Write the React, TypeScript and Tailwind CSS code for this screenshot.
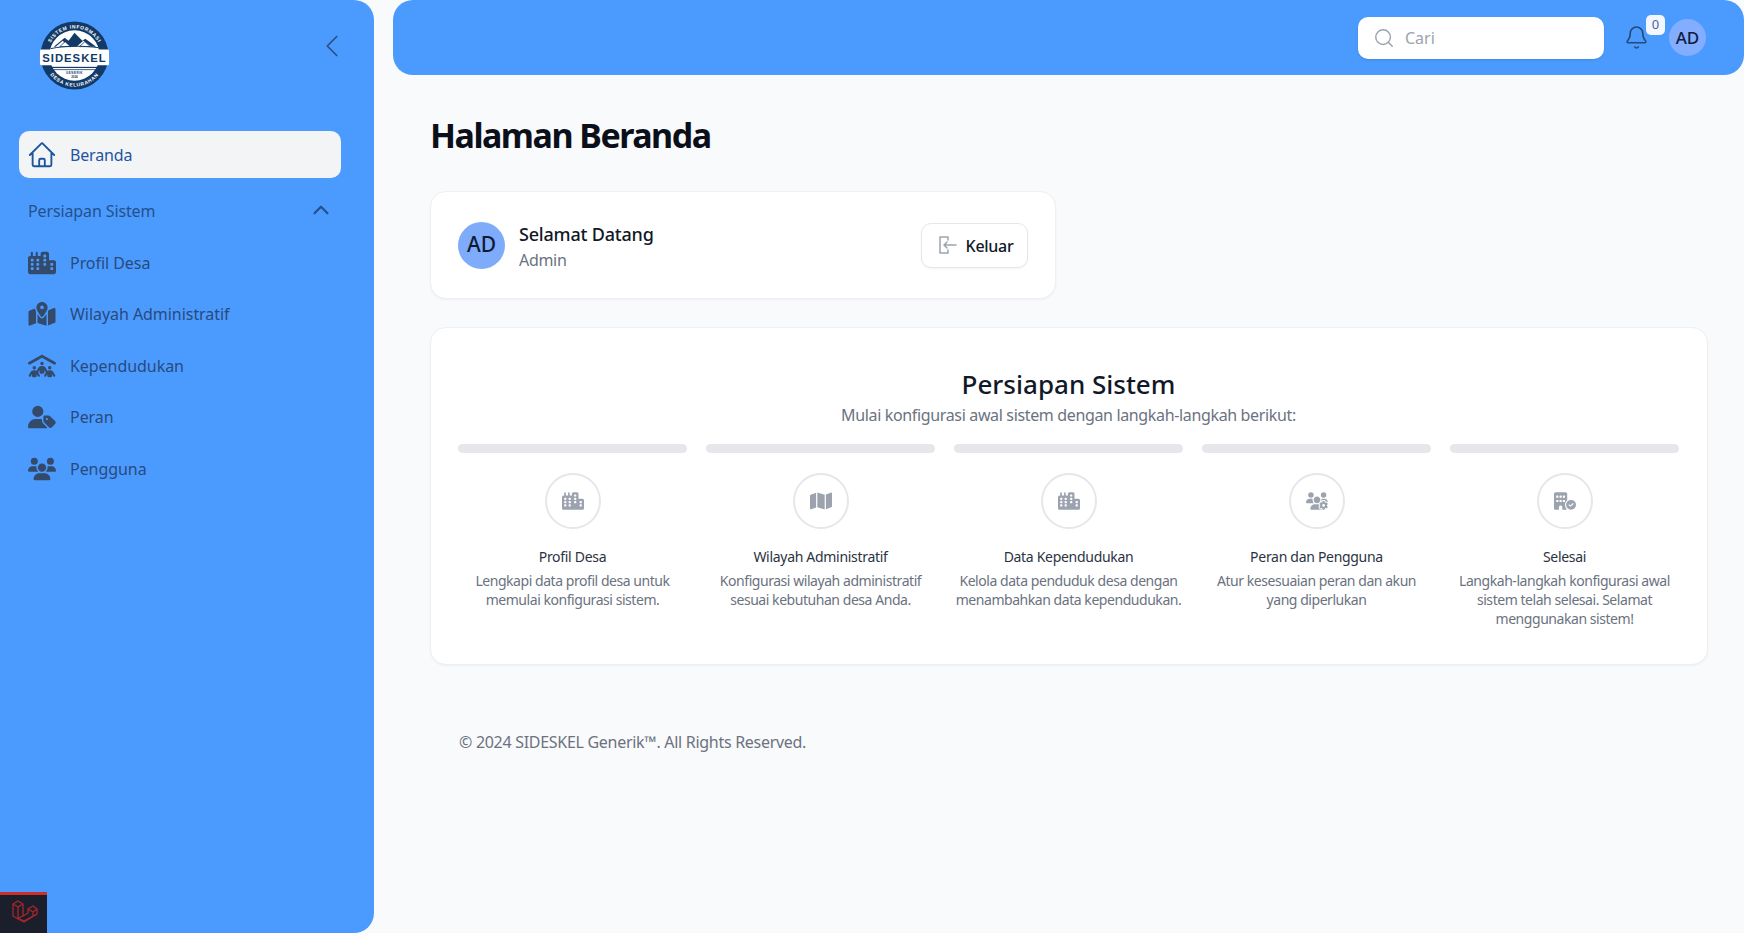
import React from "react";
import { FaCity, FaMapLocationDot, FaPeopleRoof, FaUserTag, FaUsers, FaMap, FaUsersGear, FaBuildingCircleCheck } from "react-icons/fa6";
import { HiOutlineHome } from "react-icons/hi2";
import { ChevronLeft, ChevronUp, Search, Bell } from "lucide-react";

const menu = [
  { label: "Profil Desa", icon: FaCity },
  { label: "Wilayah Administratif", icon: FaMapLocationDot },
  { label: "Kependudukan", icon: FaPeopleRoof },
  { label: "Peran", icon: FaUserTag },
  { label: "Pengguna", icon: FaUsers },
];

const steps = [
  { title: "Profil Desa", desc: "Lengkapi data profil desa untuk memulai konfigurasi sistem.", icon: FaCity },
  { title: "Wilayah Administratif", desc: "Konfigurasi wilayah administratif sesuai kebutuhan desa Anda.", icon: FaMap },
  { title: "Data Kependudukan", desc: "Kelola data penduduk desa dengan menambahkan data kependudukan.", icon: FaCity },
  { title: "Peran dan Pengguna", desc: "Atur kesesuaian peran dan akun yang diperlukan", icon: FaUsersGear },
  { title: "Selesai", desc: "Langkah-langkah konfigurasi awal sistem telah selesai. Selamat menggunakan sistem!", icon: FaBuildingCircleCheck },
];

function Logo() {
  return (
    <svg width="71" height="71" viewBox="0 0 72 72">
      <defs>
        <path id="arcTop" d="M8.5 36a27.5 27.5 0 0 1 55 0" />
        <path id="arcBottom" d="M4.5 36a31.5 31.5 0 0 0 63 0" />
      </defs>
      <circle cx="36" cy="36" r="34.5" fill="#123a68" />
      <circle cx="36" cy="36" r="25.5" fill="#fff" />
      {/* rumah */}
      <path d="M15 27l11-9 4 3 6-8 8 8 3-2 11 8h-5l-8-6-7 6h-8l-6-6-7 6z" fill="#123a68" />
      <path d="M21 27l5.5-5 5.5 5zM41 27l5.5-5 5.5 5z" fill="#fff" stroke="#123a68" strokeWidth="0.8" />
      <path d="M12 29c14-3 32-3 48-1" stroke="#123a68" strokeWidth="1" fill="none" />
      <rect x="1" y="30" width="70" height="16" rx="1.5" fill="#fff" />
      <text x="36" y="42.5" textAnchor="middle" fontSize="11.5" fontWeight="800" letterSpacing="1" fill="#123a68" fontFamily="'Liberation Sans', sans-serif">SIDESKEL</text>
      <rect x="10" y="47.5" width="52" height="1.2" fill="#123a68" />
      <rect x="13" y="50" width="46" height="0.8" fill="#123a68" />
      <text x="36" y="55" textAnchor="middle" fontSize="3" fontWeight="700" letterSpacing="0.5" fill="#123a68" fontFamily="'Liberation Sans', sans-serif">GENERIK</text>
      <text x="36" y="59" textAnchor="middle" fontSize="3" fontWeight="700" fill="#123a68" fontFamily="'Liberation Sans', sans-serif">2024</text>
      <text fontSize="5" fontWeight="700" letterSpacing="0.7" fill="#fff" fontFamily="'Liberation Sans', sans-serif">
        <textPath href="#arcTop" startOffset="50%" textAnchor="middle">SISTEM INFORMASI</textPath>
      </text>
      <text fontSize="5" fontWeight="700" letterSpacing="0.7" fill="#fff" fontFamily="'Liberation Sans', sans-serif">
        <textPath href="#arcBottom" startOffset="50%" textAnchor="middle">DESA KELURAHAN</textPath>
      </text>
    </svg>
  );
}

function LaravelMark() {
  return (
    <svg width="30" height="30" viewBox="0 0 30 30" fill="none" stroke="#a8262b" strokeWidth="1.3" strokeLinejoin="round">
      <path d="M4 5l5-3 5 3v12l5-3v-4l5-3 4 3v5l-13 8-6-3-5-3z" />
      <path d="M4 5l5 3 5-3M9 8v11l6 3M14 17l-5 2M19 10l5 3 4-3M24 13v4M15 22l13-7" />
    </svg>
  );
}

export default function App() {
  return (
    <div className="flex h-[933px] bg-[#f9fafb] text-[16px] font-['Noto_Sans',sans-serif] overflow-hidden relative">
      <aside className="w-[374px] shrink-0 bg-[#4b9bff] rounded-r-[20px] flex flex-col">
        <div className="h-[131px] flex items-start justify-between pl-[39px] pr-[23px] pt-[20px]">
          <Logo />
          <ChevronLeft className="mt-[7px] text-[#2d4f7f]" size={38} strokeWidth={1.1} />
        </div>
        <div className="ml-[19px] mr-[33px] h-[47px] rounded-[10px] bg-[#f3f4f6] flex items-center pl-[8px] gap-[13px] text-[#1e55a0] tracking-[-0.15px]">
          <HiOutlineHome size={30} />
          <span className="pt-[1px]">Beranda</span>
        </div>
        <div className="mt-[20px] pl-[28px] pr-[40px] flex items-center justify-between text-[#24508c] tracking-[-0.12px]">
          <span>Persiapan Sistem</span>
          <ChevronUp className="-mt-[1px]" size={26} strokeWidth={2} />
        </div>
        <nav className="mt-[25px] flex flex-col gap-[21.4px] pl-[28px]">
          {menu.map((m) => (
            <div key={m.label} className="h-[30px] flex items-center gap-[14px] text-[#284a7c] tracking-[-0.05px]">
              <m.icon className="w-[28px] h-[24px] text-[#334a6b]" />
              <span>{m.label}</span>
            </div>
          ))}
        </nav>
      </aside>

      <div className="flex-1 flex flex-col pl-[19px]">
        <header className="h-[75px] bg-[#4b9bff] rounded-[20px] flex items-center justify-end pr-[38px] shrink-0">
          <div className="w-[246px] h-[42px] bg-white rounded-[10px] shadow-sm flex items-center pl-[15px] gap-[10px] text-[#9ca3af]">
            <Search size={22} strokeWidth={1.6} />
            <span>Cari</span>
          </div>
          <div className="relative ml-[20px] mr-[20px]">
            <Bell className="text-[#264a78]" size={25} strokeWidth={1.5} />
            <span className="absolute -top-[10px] -right-[16px] w-[19px] h-[20px] rounded-[5px] bg-[#f3f6fb] text-[#4a63a8] text-[13px] flex items-center justify-center">0</span>
          </div>
          <div className="w-[37px] h-[37px] rounded-full bg-[#83aeff] text-[#111c3f] text-[17px] font-medium flex items-center justify-center">AD</div>
        </header>

        <main className="pl-[37px] pr-[36px]">
          <h1 className="mt-[38px] text-[34px] leading-[45px] font-bold text-[#0b0f19] tracking-[-1.5px]">Halaman Beranda</h1>

          <section className="mt-[33px] w-[626px] h-[108px] bg-white rounded-[16px] border border-[#eef0f3] shadow-[0_1px_2px_rgba(0,0,0,0.05)] flex items-center justify-between pl-[27px] pr-[27px]">
            <div className="flex items-center gap-[14px]">
              <div className="w-[47px] h-[47px] rounded-full bg-[#7fabfb] text-[#0f1a33] text-[21px] font-medium flex items-center justify-center">AD</div>
              <div className="pt-[3px]">
                <div className="text-[18px] leading-[26px] font-medium text-[#111827] tracking-[-0.2px]">Selamat Datang</div>
                <div className="mt-[1px] text-[16px] leading-[24px] text-[#6b7280] tracking-[-0.3px]">Admin</div>
              </div>
            </div>
            <button className="w-[107px] h-[45px] rounded-[10px] border border-[#e5e7eb] shadow-[0_1px_2px_rgba(0,0,0,0.05)] bg-white flex items-center justify-center gap-[8px] font-medium text-[#111827] tracking-[-0.3px]">
              <svg width="22" height="22" viewBox="0 0 22 22" fill="none" stroke="#9ca3af" strokeWidth="1.5" strokeLinecap="round" strokeLinejoin="round">
                <path d="M12 6V3H4v16h8v-3" />
                <path d="M20 11H8l3-3M8 11l3 3" />
              </svg>
              <span className="pt-[2px]">Keluar</span>
            </button>
          </section>

          <section className="mt-[28px] h-[338px] bg-white rounded-[16px] border border-[#eef0f3] shadow-[0_1px_2px_rgba(0,0,0,0.05)] pl-[27px] pr-[28px] pt-[38px]">
            <h2 className="mb-[1px] text-center text-[26px] leading-[36px] font-medium text-[#111827]">Persiapan Sistem</h2>
            <p className="text-center text-[16px] leading-[24px] text-[#6b7280] tracking-[-0.35px]">Mulai konfigurasi awal sistem dengan langkah-langkah berikut:</p>
            <div className="mt-[17px] grid grid-cols-5 gap-[19px]">
              {steps.map((s) => (
                <div key={s.title} className="flex flex-col items-center text-center">
                  <div className="w-full h-[9px] rounded-full bg-[#e5e7eb]" />
                  <div className="mt-[20px] w-[56px] h-[56px] rounded-full border-2 border-[#e5e7eb] flex items-center justify-center text-[#9ca3af]">
                    <s.icon size={22} />
                  </div>
                  <div className="mt-[18px] text-[14px] leading-[20px] text-[#2b3342] tracking-[-0.3px]">{s.title}</div>
                  <p className="mt-[4px] text-[14px] leading-[19px] text-[#6b7280] tracking-[-0.45px]">{s.desc}</p>
                </div>
              ))}
            </div>
          </section>

          <footer className="mt-[65px] pl-[29px] text-[16px] leading-[24px] text-[#6b7280] tracking-[-0.29px]">© 2024 SIDESKEL Generik™. All Rights Reserved.</footer>
        </main>
      </div>

      <div className="absolute left-0 bottom-0 w-[47px] h-[41px] bg-[#1a1f2b] border-t-[3px] border-[#c9302c] flex items-center justify-center">
        <LaravelMark />
      </div>
    </div>
  );
}
